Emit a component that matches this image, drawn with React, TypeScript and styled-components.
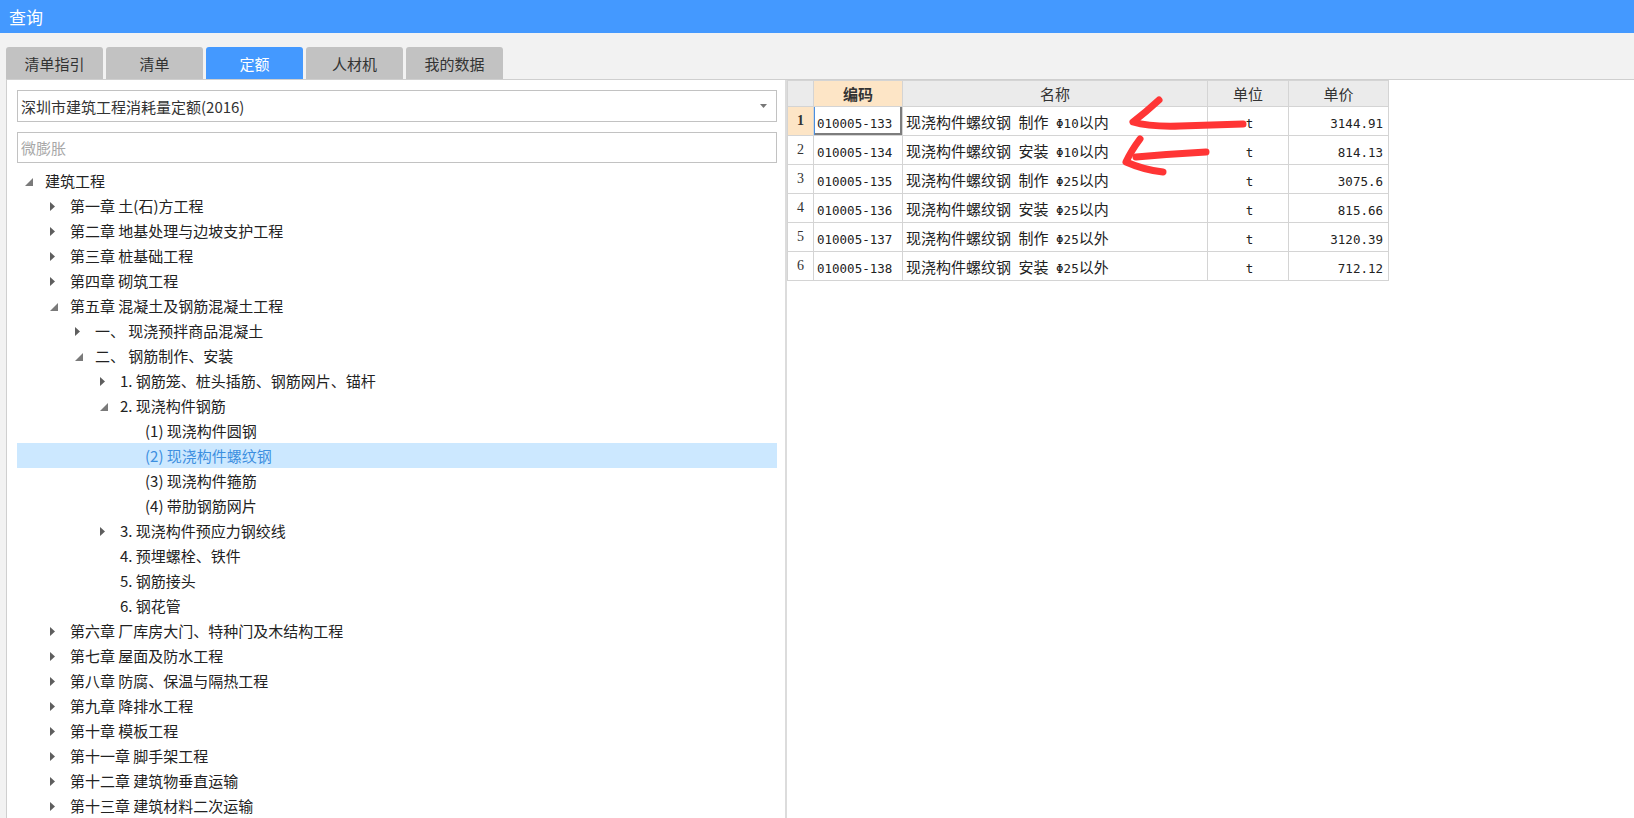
import React from 'react';
import styled, { createGlobalStyle } from 'styled-components';

const GlobalStyle = createGlobalStyle`
  html, body { margin: 0; padding: 0; }
  body {
    background: #f2f2f2;
    font-family: "Noto Sans CJK SC", "Noto Sans", sans-serif;
    overflow: hidden;
  }
  * { box-sizing: border-box; }
`;

const Page = styled.div`
  position: relative;
  width: 1634px;
  height: 818px;
  display: flex;
  flex-direction: column;
`;

const TitleBar = styled.div`
  height: 33px;
  flex-shrink: 0;
  background: #4499ff;
  color: #fff;
  font-size: 17px;
  display: flex;
  align-items: center;
  padding-left: 9px;
`;

const TabStrip = styled.div`
  display: flex;
  gap: 3px;
  height: 46px;
  flex-shrink: 0;
  padding: 14px 0 0 6px;
`;

const Tab = styled.div<{ $active?: boolean }>`
  width: 97px;
  height: 32px;
  border-radius: 3px 3px 0 0;
  background: ${p => (p.$active ? '#4499ff' : '#c2c2c2')};
  color: ${p => (p.$active ? '#fff' : '#333')};
  font-size: 15px;
  display: flex;
  align-items: center;
  justify-content: center;
`;

const Content = styled.div`
  flex: 1;
  min-height: 0;
  display: flex;
  margin-left: 6px;
  border-top: 1px solid #cfcfcf;
  border-left: 1px solid #cfcfcf;
`;

const LeftPanel = styled.div`
  width: 778px;
  flex-shrink: 0;
  background: #fff;
  padding: 10px 8px 0 10px;
  display: flex;
  flex-direction: column;
`;

const Splitter = styled.div`
  width: 2px;
  flex-shrink: 0;
  background: #dcdcdc;
`;

const RightPanel = styled.div`
  flex: 1;
  background: #fff;
`;

const Select = styled.div`
  height: 32px;
  border: 1px solid #c2c2c2;
  display: flex;
  align-items: center;
  justify-content: space-between;
  padding: 0 9px 0 3px;
  font-size: 15px;
  color: #333;
`;

const SearchBox = styled.input`
  margin-top: 10px;
  height: 31px;
  border: 1px solid #c2c2c2;
  padding: 0 3px;
  font-family: "Noto Sans CJK SC", sans-serif;
  font-size: 15px;
  color: #333;
  outline: none;
  &::placeholder { color: #a8a8a8; }
`;

const Tree = styled.div`
  margin-top: 5px;
  display: flex;
  flex-direction: column;
`;

const TreeRow = styled.div<{ $level: number; $selected?: boolean }>`
  height: 25px;
  flex-shrink: 0;
  display: flex;
  align-items: center;
  padding-left: ${p => 8 + p.$level * 25}px;
  background: ${p => (p.$selected ? '#cce8ff' : 'transparent')};
  color: ${p => (p.$selected ? '#3d8fe0' : '#222')};
  font-size: 15px;
  white-space: pre;
`;

const ArrowSlot = styled.span`
  width: 20px;
  flex-shrink: 0;
  display: flex;
  align-items: center;
`;

const Grid = styled.table`
  border-collapse: collapse;
  table-layout: fixed;
  width: 601px;
`;

const HeadCell = styled.th<{ $hl?: boolean }>`
  height: 26px;
  padding: 0;
  border: 1px solid #d4d4d4;
  background: ${p => (p.$hl ? '#fde5c6' : '#ebebeb')};
  font-weight: ${p => (p.$hl ? 700 : 400)};
  font-size: 15px;
  color: #333;
  text-align: center;
`;

const NumCell = styled.td<{ $hl?: boolean }>`
  height: 29px;
  padding: 0;
  border: 1px solid #d4d4d4;
  background: ${p => (p.$hl ? '#fde5c6' : '#fff')};
  font-family: "Liberation Serif", serif;
  font-weight: ${p => (p.$hl ? 700 : 400)};
  font-size: 14px;
  color: #333;
  text-align: center;
`;

const Cell = styled.td<{ $align?: 'left' | 'center' | 'right'; $current?: boolean }>`
  height: 29px;
  padding: ${p => (p.$align === 'right' ? '0 5px 0 0' : '0 0 0 3px')};
  border: 1px solid #d4d4d4;
  font-size: 15px;
  color: #222;
  text-align: ${p => p.$align || 'left'};
  white-space: pre;
  overflow: hidden;
  box-shadow: ${p => (p.$current ? 'inset 1px 0 0 #4a8fe0, inset -2px -2px 0 #7d7d7d' : 'none')};
`;

const Latin = styled.span`
  font-family: "DejaVu Sans Mono", monospace;
  font-size: 12.5px;
`;

const Overlay = styled.svg`
  position: absolute;
  left: 0;
  top: 0;
  pointer-events: none;
`;

const Expanded = () => (
  <svg width="8" height="8" viewBox="0 0 8 8" style={{ marginTop: 3 }}>
    <polygon points="8,0 8,8 0,8" fill="#7a7a7a" />
  </svg>
);

const Collapsed = () => (
  <svg width="6" height="9" viewBox="0 0 6 9" style={{ marginTop: 2 }}>
    <polygon points="0,0 5,4.5 0,9" fill="#5e5e5e" />
  </svg>
);

type Node = { level: number; text: string; state?: 'open' | 'closed'; selected?: boolean };

const nodes: Node[] = [
  { level: 0, text: '建筑工程', state: 'open' },
  { level: 1, text: '第一章 土(石)方工程', state: 'closed' },
  { level: 1, text: '第二章 地基处理与边坡支护工程', state: 'closed' },
  { level: 1, text: '第三章 桩基础工程', state: 'closed' },
  { level: 1, text: '第四章 砌筑工程', state: 'closed' },
  { level: 1, text: '第五章 混凝土及钢筋混凝土工程', state: 'open' },
  { level: 2, text: '一、 现浇预拌商品混凝土', state: 'closed' },
  { level: 2, text: '二、 钢筋制作、安装', state: 'open' },
  { level: 3, text: '1. 钢筋笼、桩头插筋、钢筋网片、锚杆', state: 'closed' },
  { level: 3, text: '2. 现浇构件钢筋', state: 'open' },
  { level: 4, text: '(1) 现浇构件圆钢' },
  { level: 4, text: '(2) 现浇构件螺纹钢', selected: true },
  { level: 4, text: '(3) 现浇构件箍筋' },
  { level: 4, text: '(4) 带肋钢筋网片' },
  { level: 3, text: '3. 现浇构件预应力钢绞线', state: 'closed' },
  { level: 3, text: '4. 预埋螺栓、铁件' },
  { level: 3, text: '5. 钢筋接头' },
  { level: 3, text: '6. 钢花管' },
  { level: 1, text: '第六章 厂库房大门、特种门及木结构工程', state: 'closed' },
  { level: 1, text: '第七章 屋面及防水工程', state: 'closed' },
  { level: 1, text: '第八章 防腐、保温与隔热工程', state: 'closed' },
  { level: 1, text: '第九章 降排水工程', state: 'closed' },
  { level: 1, text: '第十章 模板工程', state: 'closed' },
  { level: 1, text: '第十一章 脚手架工程', state: 'closed' },
  { level: 1, text: '第十二章 建筑物垂直运输', state: 'closed' },
  { level: 1, text: '第十三章 建筑材料二次运输', state: 'closed' },
];

const rows = [
  { code: '010005-133', name: '现浇构件螺纹钢 制作 Φ10以内', unit: 't', price: '3144.91' },
  { code: '010005-134', name: '现浇构件螺纹钢 安装 Φ10以内', unit: 't', price: '814.13' },
  { code: '010005-135', name: '现浇构件螺纹钢 制作 Φ25以内', unit: 't', price: '3075.6' },
  { code: '010005-136', name: '现浇构件螺纹钢 安装 Φ25以内', unit: 't', price: '815.66' },
  { code: '010005-137', name: '现浇构件螺纹钢 制作 Φ25以外', unit: 't', price: '3120.39' },
  { code: '010005-138', name: '现浇构件螺纹钢 安装 Φ25以外', unit: 't', price: '712.12' },
];

const mixed = (text: string) =>
  text
    .split(/([\u4e00-\u9fff]+)/)
    .filter(Boolean)
    .map((s, i) => (/[\u4e00-\u9fff]/.test(s) ? <span key={i}>{s}</span> : <Latin key={i}>{s}</Latin>));

const tabs = ['清单指引', '清单', '定额', '人材机', '我的数据'];

export default function App() {
  return (
    <Page>
      <GlobalStyle />
      <TitleBar>查询</TitleBar>
      <TabStrip>
        {tabs.map(t => (
          <Tab key={t} $active={t === '定额'}>{t}</Tab>
        ))}
      </TabStrip>
      <Content>
        <LeftPanel>
          <Select>
            <span>深圳市建筑工程消耗量定额(2016)</span>
            <svg width="7" height="4" viewBox="0 0 7 4">
              <polygon points="0,0 7,0 3.5,4" fill="#777" />
            </svg>
          </Select>
          <SearchBox placeholder="微膨胀" />
          <Tree>
            {nodes.map((n, i) => (
              <TreeRow key={i} $level={n.level} $selected={n.selected}>
                <ArrowSlot>
                  {n.state === 'open' && <Expanded />}
                  {n.state === 'closed' && <Collapsed />}
                </ArrowSlot>
                {n.text}
              </TreeRow>
            ))}
          </Tree>
        </LeftPanel>
        <Splitter />
        <RightPanel>
          <Grid>
            <colgroup>
              <col style={{ width: 26 }} />
              <col style={{ width: 89 }} />
              <col style={{ width: 305 }} />
              <col style={{ width: 81 }} />
              <col style={{ width: 100 }} />
            </colgroup>
            <thead>
              <tr>
                <HeadCell />
                <HeadCell $hl>编码</HeadCell>
                <HeadCell>名称</HeadCell>
                <HeadCell>单位</HeadCell>
                <HeadCell>单价</HeadCell>
              </tr>
            </thead>
            <tbody>
              {rows.map((r, i) => (
                <tr key={r.code}>
                  <NumCell $hl={i === 0}>{i + 1}</NumCell>
                  <Cell $current={i === 0}><Latin>{r.code}</Latin></Cell>
                  <Cell>{mixed(r.name)}</Cell>
                  <Cell $align="center"><Latin>{r.unit}</Latin></Cell>
                  <Cell $align="right"><Latin>{r.price}</Latin></Cell>
                </tr>
              ))}
            </tbody>
          </Grid>
        </RightPanel>
      </Content>
      <Overlay width="1634" height="818" viewBox="0 0 1634 818">
        <g fill="none" stroke="#ff3535" strokeWidth="7" strokeLinecap="round" strokeLinejoin="round">
          <path d="M1159 100 Q1146 112 1133 122 Q1150 127 1180 126 L1243 124" />
          <path d="M1206 152 Q1170 154 1136 157" />
          <path d="M1140 139 Q1131 151 1126 162 Q1144 170 1163 172" />
        </g>
      </Overlay>
    </Page>
  );
}
